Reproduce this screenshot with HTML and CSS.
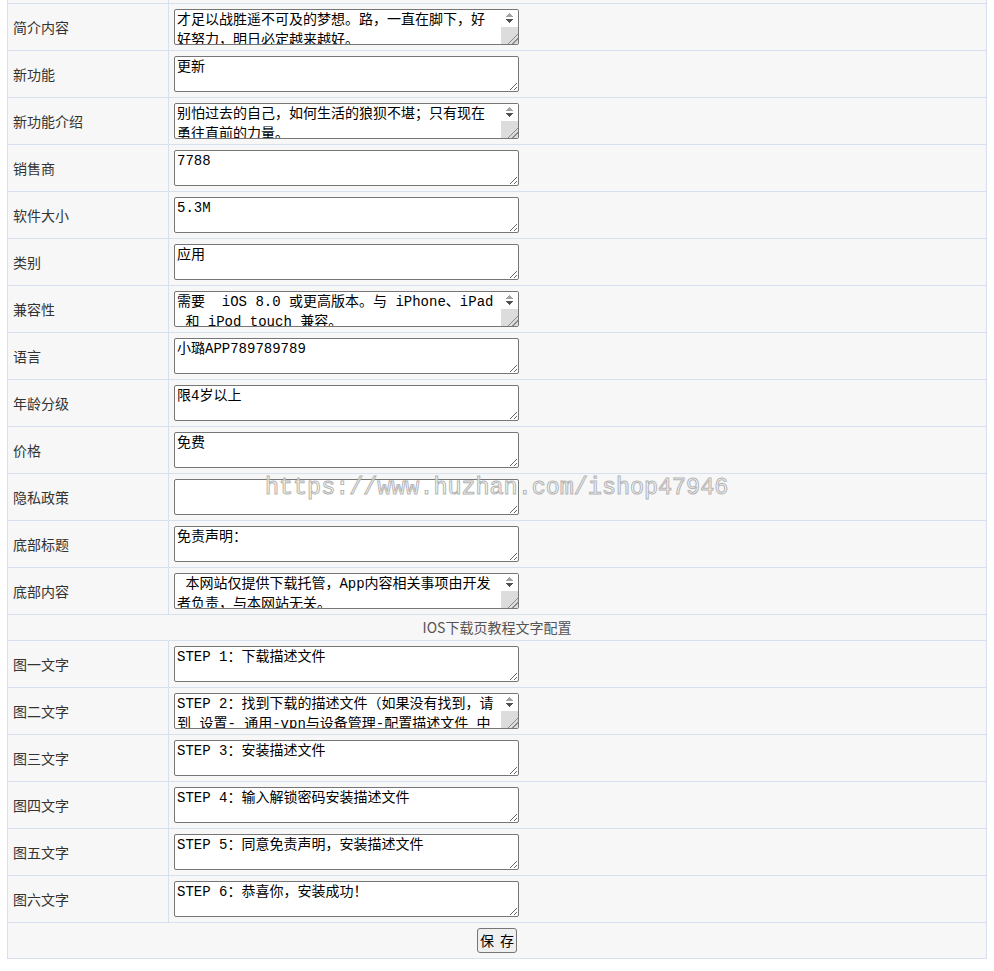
FILE: index.html
```html
<!DOCTYPE html>
<html lang="zh-CN">
<head>
<meta charset="utf-8">
<title>应用信息配置</title>
<link rel="stylesheet" href="styles.css">
</head>
<body>
<div class="page">
  <form class="config-form">
    <table class="config-table">
      <tbody>
        <tr class="edge-row"><td class="label"><div class="edge"></div></td><td class="value"><div class="edge"></div></td></tr>
        <tr><td class="label">简介内容</td><td class="value"><div class="field-box"><textarea class="field long">才足以战胜遥不可及的梦想。路，一直在脚下，好好努力，明日必定越来越好。</textarea><div class="vscroll" aria-hidden="true"><span class="sb-up"></span><span class="sb-down"></span><span class="sb-grip"></span></div></div></td></tr>
        <tr><td class="label">新功能</td><td class="value"><textarea class="field">更新</textarea></td></tr>
        <tr><td class="label">新功能介绍</td><td class="value"><div class="field-box"><textarea class="field long">别怕过去的自己，如何生活的狼狈不堪；只有现在勇往直前的力量。</textarea><div class="vscroll" aria-hidden="true"><span class="sb-up"></span><span class="sb-down"></span><span class="sb-grip"></span></div></div></td></tr>
        <tr><td class="label">销售商</td><td class="value"><textarea class="field">7788</textarea></td></tr>
        <tr><td class="label">软件大小</td><td class="value"><textarea class="field">5.3M</textarea></td></tr>
        <tr><td class="label">类别</td><td class="value"><textarea class="field">应用</textarea></td></tr>
        <tr><td class="label">兼容性</td><td class="value"><div class="field-box"><textarea class="field long">需要  iOS 8.0 或更高版本。与 iPhone、iPad &nbsp;和 iPod touch 兼容。</textarea><div class="vscroll" aria-hidden="true"><span class="sb-up"></span><span class="sb-down"></span><span class="sb-grip"></span></div></div></td></tr>
        <tr><td class="label">语言</td><td class="value"><textarea class="field">小璐APP789789789</textarea></td></tr>
        <tr><td class="label">年龄分级</td><td class="value"><textarea class="field">限4岁以上</textarea></td></tr>
        <tr><td class="label">价格</td><td class="value"><textarea class="field">免费</textarea></td></tr>
        <tr><td class="label">隐私政策</td><td class="value"><textarea class="field"></textarea></td></tr>
        <tr><td class="label">底部标题</td><td class="value"><textarea class="field">免责声明：</textarea></td></tr>
        <tr><td class="label">底部内容</td><td class="value"><div class="field-box"><textarea class="field long"> 本网站仅提供下载托管，App内容相关事项由开发者负责，与本网站无关。</textarea><div class="vscroll" aria-hidden="true"><span class="sb-up"></span><span class="sb-down"></span><span class="sb-grip"></span></div></div></td></tr>
        <tr class="section-row"><td class="section" colspan="2">IOS下载页教程文字配置</td></tr>
        <tr><td class="label">图一文字</td><td class="value"><textarea class="field">STEP 1：下载描述文件</textarea></td></tr>
        <tr><td class="label">图二文字</td><td class="value"><div class="field-box"><textarea class="field long">STEP 2：找到下载的描述文件（如果没有找到，请到 设置- 通用-vpn与设备管理-配置描述文件 中查看）</textarea><div class="vscroll" aria-hidden="true"><span class="sb-up"></span><span class="sb-down"></span><span class="sb-grip"></span></div></div></td></tr>
        <tr><td class="label">图三文字</td><td class="value"><textarea class="field">STEP 3：安装描述文件</textarea></td></tr>
        <tr><td class="label">图四文字</td><td class="value"><textarea class="field">STEP 4：输入解锁密码安装描述文件</textarea></td></tr>
        <tr><td class="label">图五文字</td><td class="value"><textarea class="field">STEP 5：同意免责声明，安装描述文件</textarea></td></tr>
        <tr><td class="label">图六文字</td><td class="value"><textarea class="field">STEP 6：恭喜你，安装成功！</textarea></td></tr>
        <tr class="action-row"><td class="actions" colspan="2"><button type="button" class="save-btn">保 存</button></td></tr>
      </tbody>
    </table>
  </form>
  <div class="watermark">https://www.huzhan.com/ishop47946</div>
</div>
</body>
</html>
```

FILE: styles.css
```css
html, body {
  margin: 0;
  padding: 0;
  background: #ffffff;
}

.page {
  position: relative;
  padding: 0 7px;
  font-family: "Noto Sans CJK SC", "Noto Sans", sans-serif;
  font-size: 14px;
  color: #333333;
}

.config-form {
  margin: 0;
}

.config-table {
  width: 980px;
  border-collapse: separate;
  border-spacing: 0;
  table-layout: fixed;
  border-left: 1px solid #d6e0ef;
  background: #f7f7f7;
}

.config-table td {
  border-right: 1px solid #d6e0ef;
  border-bottom: 1px solid #d6e0ef;
  vertical-align: middle;
}

.label {
  width: 150px;
  padding: 0 5px;
  line-height: 20px;
  white-space: nowrap;
}

.value {
  padding: 5px;
}

.edge-row td {
  padding-top: 0;
  padding-bottom: 0;
}

.edge {
  height: 3px;
}

.field {
  display: block;
  box-sizing: border-box;
  width: 345px;
  height: 36px;
  margin: 0;
  padding: 0 4px 0 2px;
  border: 1px solid #767676;
  border-radius: 2px;
  background: #ffffff;
  color: #000000;
  font-family: "Liberation Mono", "Noto Sans CJK SC", monospace;
  font-size: 14px;
  line-height: 20px;
  resize: vertical;
  overflow: hidden;
}

/* long fields carry a classic vertical scrollbar on the right */
.field-box {
  position: relative;
  width: 345px;
}

.field.long {
  padding-right: 21px;
}

.vscroll {
  position: absolute;
  top: 1px;
  right: 1px;
  bottom: 1px;
  width: 17px;
  display: flex;
  flex-direction: column;
  background: #ffffff;
  border-radius: 0 1px 1px 0;
  pointer-events: none;
}

.sb-up {
  height: 8px;
  background: conic-gradient(from 139deg at 50% 0, #a3a3a3 0deg 82deg, transparent 82deg) no-repeat 5px 3px / 7px 4px;
}

.sb-down {
  height: 9px;
  background: conic-gradient(from -41deg at 50% 100%, #505050 0deg 82deg, transparent 82deg) no-repeat 5px 1px / 7px 4px;
}

.sb-grip {
  flex: 1;
  background-color: #dcdcdc;
  background-image: linear-gradient(to bottom right, transparent 0 68%, #8a8a8a 68% 72%, transparent 72% 82%, #8a8a8a 82% 86%, transparent 86%);
}

.section {
  height: 25px;
  padding: 0;
  line-height: 25px;
  text-align: center;
  color: #555555;
}

.actions {
  padding: 5px;
  text-align: center;
}

.save-btn {
  box-sizing: border-box;
  display: inline-block;
  vertical-align: top;
  width: 40px;
  height: 25px;
  padding: 0;
  border: 1px solid #767676;
  border-radius: 3px;
  background: #efefef;
  color: #000000;
  font-family: "Noto Sans CJK SC", sans-serif;
  font-size: 14px;
  line-height: 21px;
  word-spacing: 3px;
}

/* site watermark stamped across the form */
.watermark {
  position: absolute;
  left: 265px;
  top: 472px;
  font-family: "Liberation Mono", monospace;
  font-size: 23.4px;
  line-height: 32px;
  color: rgba(255, 255, 255, 0.6);
  -webkit-text-stroke: 1px #b4b4b4;
  white-space: nowrap;
  pointer-events: none;
}
```
